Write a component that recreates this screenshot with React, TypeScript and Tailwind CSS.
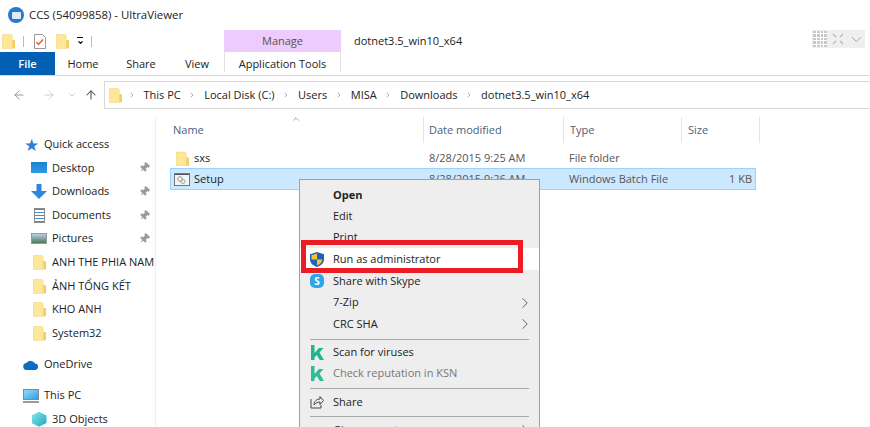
import { ChevronRight, ChevronUp, ChevronDown, ArrowLeft, ArrowRight, ArrowUp, Pin } from "lucide-react";

function Folder({ className = "" }: { className?: string }) {
  return (
    <svg viewBox="0 0 14 16" className={className}>
      <path d="M0 1h10l1 1v14H0z" fill="#fde89a" stroke="#f0d68a" strokeWidth="0.6" />
      <path d="M11 7h3v9h-3z" fill="#f5cf63" />
    </svg>
  );
}

function KIcon({ faded }: { faded?: boolean }) {
  return (
    <svg viewBox="0 0 14 15" className={`h-[15px] w-[14px] ${faded ? "opacity-90" : ""}`}>
      <path d="M1 0h3.500v15H1zM4.500 8 9 3h4.500L9.500 7.500 14 15H9.800l-3-5-2.300 2.400z" fill="#1fb58f" />
    </svg>
  );
}

function Shield() {
  return (
    <svg viewBox="0 0 14 15" className="h-[15px] w-[14px]">
      <path d="M7 0 14 2.200v5.400C14 11.400 10.600 13.800 7 15 3.400 13.800 0 11.400 0 7.600V2.200z" fill="#1f63b8" />
      <path d="M7 1.500v6H1.500V3.200zM7 7.500h5.500C12 10.500 9.800 12.400 7 13.500z" fill="#f7c331" />
    </svg>
  );
}

function Skype() {
  return (
    <div className="flex h-[14px] w-[14px] items-center justify-center rounded-[5px] bg-[#2ca6e8] text-[10px] font-bold leading-none text-white">
      S
    </div>
  );
}

function ShareIcon() {
  return (
    <svg viewBox="0 0 14 14" fill="none" stroke="#444" strokeWidth="1" className="h-[14px] w-[14px]">
      <path d="M1 4v9h10V10M4 10c0-4 3-6 6-6V1.500l3.500 4-3.500 4V7C7.500 7 5.500 8 4 10z" />
    </svg>
  );
}

function ArrowDownBlue() {
  return (
    <svg viewBox="0 0 16 15" className="h-[15px] w-[16px]">
      <path d="M5.500 0h5v7H16l-8 8-8-8h5.500z" fill="#2b86dc" />
    </svg>
  );
}

function BatchIcon() {
  return (
    <svg viewBox="0 0 16 13" className="mr-[4px] h-[13px] w-[16px]">
      <rect x="0.500" y="0.500" width="15" height="12" fill="#f4f4f4" stroke="#777" />
      <path d="M1 1.500h14" stroke="#555" />
      <circle cx="6" cy="6" r="2.300" fill="none" stroke="#999" />
      <circle cx="9" cy="8.500" r="2" fill="none" stroke="#8aa" />
    </svg>
  );
}

function NavItem({ label, icon, pinned, indent = true }: { label: string; icon: React.ReactNode; pinned?: boolean; indent?: boolean }) {
  return (
    <div className={`flex h-[23.600px] items-center ${indent ? "pl-[31px]" : "pl-[23px]"}`}>
      <div className="mr-[5px] flex w-[16px] shrink-0 items-center justify-center">{icon}</div>
      <span className="min-w-0 flex-1 overflow-hidden whitespace-nowrap pr-[2px]">{label}</span>
      {pinned && <Pin size={11} className="mr-[5px] shrink-0 rotate-45 fill-[#9a9a9a] text-[#9a9a9a]" />}
    </div>
  );
}

function MenuItem({ label, icon, arrow, className = "" }: { label: string; icon?: React.ReactNode; arrow?: boolean; className?: string }) {
  return (
    <div className={`flex h-[21.300px] shrink-0 items-center pl-[10px] pr-[10px] ${className}`}>
      <div className="mr-[9px] flex w-[14px] shrink-0 items-center justify-center">{icon}</div>
      <span>{label}</span>
      {arrow && <ChevronRight size={18} strokeWidth={1} className="ml-auto -mr-[5px] text-[#333]" />}
    </div>
  );
}

const Sep = () => <div className="mx-[10px] mb-[2px] mt-[4px] h-px shrink-0 bg-[#a8a8a8]" />;

const crumbs = ["This PC", "Local Disk (C:)", "Users", "MISA", "Downloads", "dotnet3.5_win10_x64"];

export default function App() {
  return (
    <div className="relative h-[427px] w-[870px] overflow-hidden bg-white font-['Open_Sans',sans-serif] text-[11px] text-[#222]">
      {/* title */}
      <div className="flex h-[30px] items-center pl-[8px] text-[11.400px]">
        <div className="mr-[5px] flex h-[16px] w-[16px] items-center justify-center rounded-full bg-[#2a78c8]">
          <div className="h-[7px] w-[9px] rounded-[1px] bg-[#dcecfa]" />
        </div>
        CCS (54099858) - UltraViewer
      </div>

      {/* quick access + contextual header */}
      <div className="flex h-[22px]">
        <div className="flex w-[224px] items-center pl-[2px]">
          <Folder className="h-[16px] w-[13px]" />
          <div className="ml-[8px] h-[11px] w-px bg-[#bbb]" />
          <svg viewBox="0 0 12 15" className="ml-[10px] h-[15px] w-[12px]" fill="none">
            <path d="M.5.5h8l3 3v11H.500z" fill="#fff" stroke="#999" />
            <path d="M2.500 8l2 2.500 4.500-5" stroke="#e0592a" strokeWidth="1.300" />
          </svg>
          <Folder className="ml-[10px] h-[16px] w-[13px]" />
          <div className="ml-[7px] flex w-[8px] flex-col items-center gap-[1px]">
            <div className="h-px w-[6px] bg-black" />
            <ChevronDown size={7} strokeWidth={4} className="text-black" />
          </div>
          <div className="ml-[7px] h-[11px] w-px bg-[#bbb]" />
        </div>
        <div className="flex w-[117px] items-center justify-center bg-[#eecbfd] text-[#555]">Manage</div>
        <div className="ml-[13px] flex items-center">dotnet3.5_win10_x64</div>
        <div className="ml-auto mr-[5px] flex h-[18px] w-[53px] items-center gap-[3px] bg-[#efefef] pl-px">
          <div className="grid h-[16px] w-[14px] grid-cols-4 gap-px bg-white">
            {Array.from({ length: 20 }).map((_, i) => <div key={i} className="bg-[#c8c8c8]" />)}
          </div>
          <svg viewBox="0 0 12 12" className="ml-[2px] h-[12px] w-[12px]" fill="none" stroke="#bdbdbd" strokeWidth="1.500">
            <path d="M1 1l3 3M11 1 8 4M1 11l3-3M11 11 8 8" />
          </svg>
          <ChevronDown size={17} strokeWidth={1.300} className="ml-[1px] text-[#a0a0a0]" />
        </div>
      </div>

      {/* tabs */}
      <div className="box-content flex h-[23px] items-center border-b border-[#d9d9d9]">
        <div className="flex h-full w-[55px] items-center justify-center bg-[#0160b4] pt-px font-semibold text-white">File</div>
        <div className="flex h-full w-[56px] items-center justify-center pt-px">Home</div>
        <div className="flex h-full w-[60px] items-center justify-center pt-px">Share</div>
        <div className="flex h-full w-[52px] items-center justify-center pt-px">View</div>
        <div className="ml-px flex h-[20px] w-[117px] items-center justify-center self-start border-x border-[#e2e2e2] pt-[5px]">Application Tools</div>
      </div>

      {/* address row */}
      <div className="mt-[5px] flex h-[28px] items-center">
        <div className="flex w-[104px] items-center pl-[12px] text-[#8a8a8a]">
          <ArrowLeft size={14} strokeWidth={1.500} />
          <ArrowRight size={14} strokeWidth={1.500} className="ml-[16px] text-[#c8c8c8]" />
          <ChevronDown size={8} strokeWidth={2} className="ml-[12px] text-[#aaa]" />
          <ArrowUp size={14} strokeWidth={1.800} className="ml-[8px] text-[#555]" />
        </div>
        <div className="flex h-full flex-1 items-center border-y border-l border-[#d9d9d9] pl-[4px]">
          <Folder className="-mr-[2px] h-[16px] w-[13px]" />
          {crumbs.map((c) => (
            <div key={c} className="flex items-center">
              <ChevronRight size={8} strokeWidth={2} className="mx-[7.750px] text-[#888]" />
              <span>{c}</span>
            </div>
          ))}
        </div>
      </div>

      {/* body */}
      <div className="mt-[8px] flex h-[310px]">
        <div className="w-[156px] shrink-0 border-r border-[#efefef] pt-[15.500px]">
          <NavItem indent={false} label="Quick access" icon={<span className="text-[17px] leading-none text-[#2f7fd8]">★</span>} />
          <NavItem pinned label="Desktop" icon={<div className="h-[11px] w-[16px] bg-gradient-to-b from-[#1a7fd0] to-[#2f9be8]" />} />
          <NavItem pinned label="Downloads" icon={<ArrowDownBlue />} />
          <NavItem pinned label="Documents" icon={<div className="h-[15px] w-[11px] border border-[#8a8a8a] bg-[repeating-linear-gradient(180deg,#4a90c8_0,#4a90c8_1px,#fff_1px,#fff_3px)]" />} />
          <NavItem pinned label="Pictures" icon={<div className="h-[11px] w-[16px] border border-[#999] bg-gradient-to-b from-[#b8d0e8] to-[#4c7a5a]" />} />
          <NavItem label="ANH THE PHIA NAM" icon={<Folder className="h-[16px] w-[13px]" />} />
          <NavItem label="ẢNH TỔNG KẾT" icon={<Folder className="h-[16px] w-[13px]" />} />
          <NavItem label="KHO ANH" icon={<Folder className="h-[16px] w-[13px]" />} />
          <NavItem label="System32" icon={<Folder className="h-[16px] w-[13px]" />} />
          <div className="h-[8px]" />
          <NavItem indent={false} label="OneDrive" icon={
            <svg viewBox="0 0 16 10" className="h-[10px] w-[16px]"><path d="M4 10a3.500 3.500 0 0 1-.5-7A5 5 0 0 1 12 3.500 3.300 3.300 0 0 1 12.500 10z" fill="#0f6cc4" /></svg>
          } />
          <div className="h-[7.500px]" />
          <NavItem indent={false} label="This PC" icon={<div className="h-[14px] w-[16px] border-b-2 border-[#9a9a9a]"><div className="h-[11px] w-full border border-[#888] bg-gradient-to-br from-[#8fdcf8] to-[#2c9fe0]" /></div>} />
          <NavItem label="3D Objects" icon={<div className="h-[15px] w-[15px] bg-gradient-to-br from-[#7fe6ee] to-[#1ba5b8] [clip-path:polygon(50%_0,100%_25%,100%_75%,50%_100%,0_75%,0_25%)]" />} />
        </div>

        <div className="flex-1 pl-[15px]">
          {/* column headers */}
          <div className="relative flex h-[26px] items-center text-[#4c607a]">
            <ChevronUp size={10} strokeWidth={1.500} className="absolute left-[120px] top-[-3px] text-[#666]" />
            <div className="w-[252px] pl-[2px]">Name</div>
            <div className="flex h-full w-[140px] items-center border-l border-[#e5e5e5] pl-[5px]">Date modified</div>
            <div className="flex h-full w-[118px] items-center border-l border-[#e5e5e5] pl-[6px]">Type</div>
            <div className="flex h-full w-[79px] items-center border-x border-[#e5e5e5] pl-[6px]">Size</div>
          </div>
          {/* rows */}
          <div className="-ml-px mt-[5px] flex h-[20px] items-center text-[#555]">
            <div className="flex w-[253px] items-center pl-[6px] text-[#222]">
              <Folder className="mr-[5px] h-[15px] w-[13px]" />sxs
            </div>
            <div className="w-[139px] pl-[6px]">8/28/2015 9:25 AM</div>
            <div className="w-[118px] pl-[7px]">File folder</div>
          </div>
          <div className="-ml-px flex h-[22px] w-[586px] items-center border border-[#99d1ff] bg-[#cce8ff] text-[#555]">
            <div className="flex w-[252px] items-center pl-[3px] text-[#222]">
              <BatchIcon />
              Setup
            </div>
            <div className="w-[139px] pl-[6px]">8/28/2015 9:26 AM</div>
            <div className="w-[118px] pl-[7px]">Windows Batch File</div>
            <div className="flex-1 pr-[3px] text-right">1 KB</div>
          </div>
        </div>
      </div>

      {/* context menu */}
      <div className="absolute left-[299px] top-[179px] flex h-[260px] w-[241px] flex-col border border-[#a0a0a0] bg-[#eeeeee] pt-[4.500px]">
        <MenuItem label="Open" className="font-bold" />
        <MenuItem label="Edit" />
        <MenuItem label="Print" />
        <MenuItem label="Run as administrator" icon={<Shield />} className="bg-white" />
        <MenuItem label="Share with Skype" icon={<Skype />} className="mt-[1px]" />
        <MenuItem label="7-Zip" arrow />
        <MenuItem label="CRC SHA" arrow />
        <Sep />
        <MenuItem label="Scan for viruses" icon={<KIcon />} />
        <MenuItem label="Check reputation in KSN" icon={<KIcon faded />} className="text-[#777]" />
        <Sep />
        <MenuItem label="Share" icon={<ShareIcon />} />
        <Sep />
        <MenuItem label="Give access to" arrow />
      </div>

      {/* red highlight */}
      <div className="absolute left-[301px] top-[240px] h-[33px] w-[222px] border-[5px] border-[#ed1c24]" />
    </div>
  );
}
